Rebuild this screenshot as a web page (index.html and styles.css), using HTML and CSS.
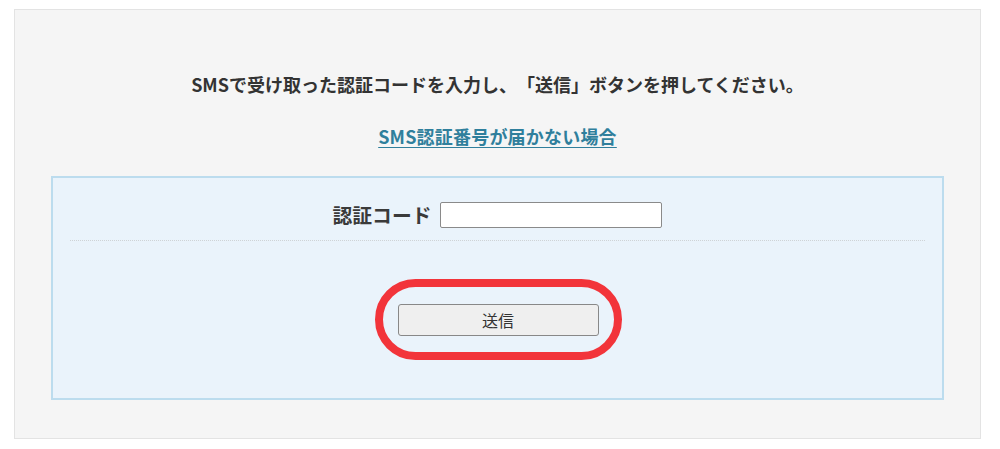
FILE: index.html
```html
<!DOCTYPE html>
<html lang="ja">
<head>
<meta charset="utf-8">
<link rel="stylesheet" href="styles.css">
</head>
<body>
<div class="panel">
  <p class="lead">SMSで受け取った認証コードを入力し、「送信」ボタンを押してください。</p>
  <p class="help"><a href="#">SMS認証番号が届かない場合</a></p>
  <div class="form-box">
    <div class="field-row">
      <label class="field-label" for="code">認証コード</label>
      <input class="field-input" id="code" type="text">
    </div>
    <div class="actions">
      <div class="highlight">
        <button class="submit" type="button">送信</button>
      </div>
    </div>
  </div>
</div>
</body>
</html>
```
FILE: styles.css
```css
html, body {
  margin: 0;
  padding: 0;
  background: #ffffff;
}
body {
  padding: 9px 0 0 14px;
  font-family: "Noto Sans CJK JP", "Noto Sans", sans-serif;
  color: #333333;
}
.panel {
  box-sizing: border-box;
  width: 967px;
  height: 430px;
  border: 1px solid #e3e3e3;
  background: #f5f5f5;
  padding: 61px 36px 0 36px;
}
.lead {
  margin: 0;
  text-align: center;
  font-size: 18px;
  line-height: 26px;
  font-weight: 700;
  color: #333333;
  text-spacing-trim: space-all;
}
.help {
  margin: 26px 0 0 0;
  text-align: center;
  font-size: 18px;
  line-height: 26px;
  font-weight: 700;
}
.help a {
  color: #2f7f9c;
  text-decoration: underline;
  text-underline-offset: 3px;
  letter-spacing: 0.2px;
}
.form-box {
  box-sizing: border-box;
  margin-top: 27px;
  height: 224px;
  border: 2px solid #bcdcee;
  background: #eaf3fb;
  padding: 0 17px;
}
.field-row {
  display: flex;
  align-items: center;
  justify-content: center;
  gap: 9px;
  padding: 24px 0 12px 0;
  border-bottom: 1px dotted #cfd3d6;
}
.field-label {
  font-size: 19.8px;
  line-height: 26px;
  font-weight: 700;
  color: #3a3a3a;
}
.field-input {
  box-sizing: border-box;
  width: 222px;
  height: 26px;
  margin: 0;
  border: 1px solid #8a8a8a;
  border-radius: 2px;
  background: #ffffff;
}
.actions {
  display: flex;
  justify-content: center;
  padding-top: 38px;
  margin-left: 2px;
}
.highlight {
  box-sizing: border-box;
  width: 247px;
  height: 81px;
  border: 8px solid #f2343a;
  border-radius: 41px;
  display: flex;
  align-items: center;
  justify-content: center;
  padding-top: 1px;
}
.submit {
  box-sizing: border-box;
  width: 201px;
  height: 32px;
  margin: 0 1px 0 0;
  border: 1px solid #888888;
  border-radius: 3px;
  background: #efefef;
  font-family: "Noto Sans CJK JP", "Noto Sans", sans-serif;
  font-size: 16px;
  color: #333333;
  padding: 0;
}
```
